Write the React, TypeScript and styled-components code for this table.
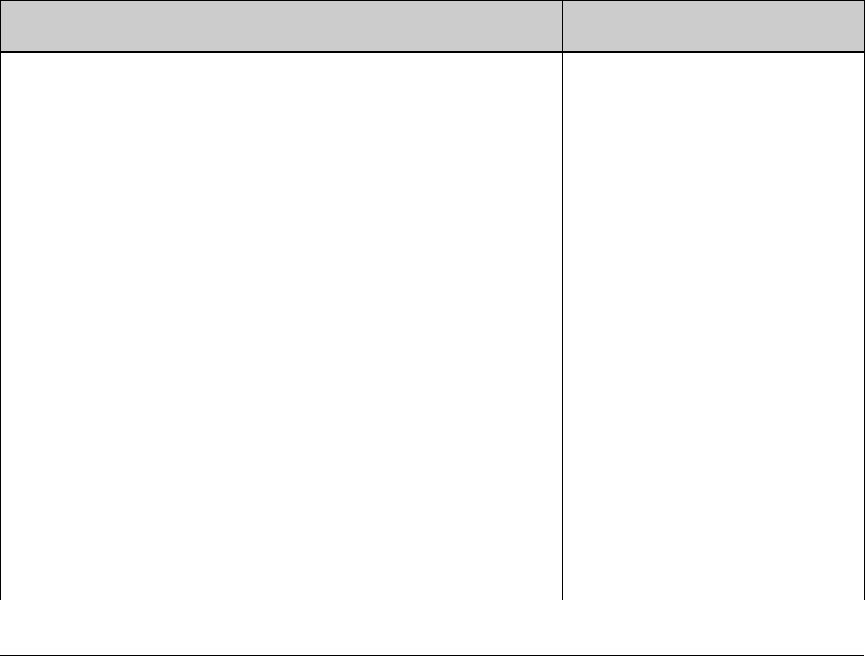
import React from "react";
import styled, { createGlobalStyle } from "styled-components";

const Global = createGlobalStyle`
  html, body { margin: 0; padding: 0; background: #fff; }
  body { font-family: "Liberation Sans", Arial, sans-serif; }
`;

const Page = styled.div`
  display: flex;
  flex-direction: column;
  width: 866px;
  height: 656px;
`;

const Table = styled.div`
  width: 865px;
  border: 1px solid #000;
  border-bottom: none;
  box-sizing: border-box;
  display: flex;
  flex-direction: column;
`;

const Row = styled.div<{ $head?: boolean; $height: number }>`
  display: grid;
  grid-template-columns: 562px 1fr;
  height: ${(p) => p.$height}px;
  background: ${(p) => (p.$head ? "#cccccc" : "#ffffff")};
  border-bottom: ${(p) => (p.$head ? "2px solid #000" : "none")};
`;

const Cell = styled.div<{ $divider?: boolean }>`
  border-right: ${(p) => (p.$divider ? "1px solid #000" : "none")};
`;

const Footer = styled.div`
  margin-top: 55px;
  width: 864px;
  border-bottom: 1px solid #000;
`;

export default function App() {
  return (
    <>
      <Global />
      <Page>
        <Table>
          <Row $head $height={50}>
            <Cell $divider />
            <Cell />
          </Row>
          <Row $height={547}>
            <Cell $divider />
            <Cell />
          </Row>
        </Table>
        <Footer />
      </Page>
    </>
  );
}
